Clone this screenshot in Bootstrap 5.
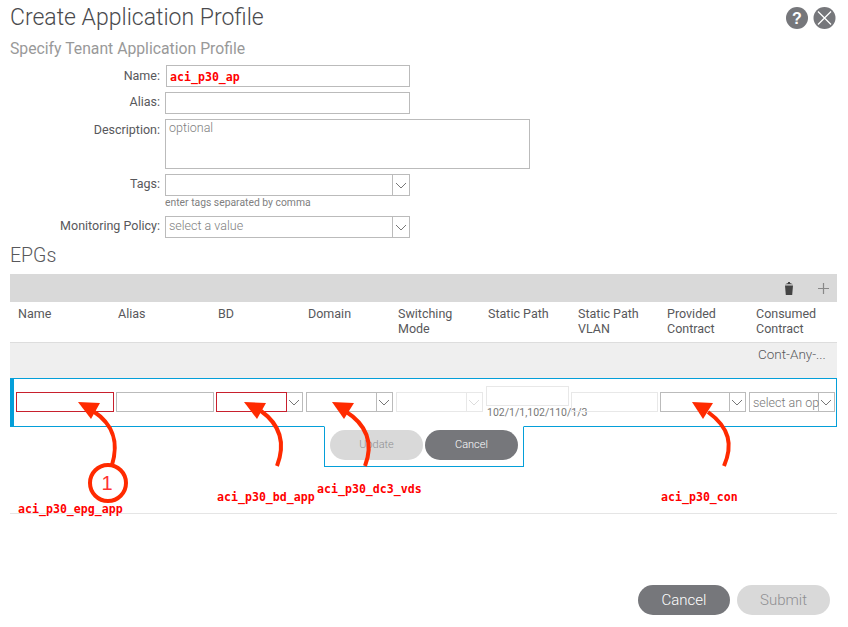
<!DOCTYPE html>
<html lang="en">
<head>
<meta charset="utf-8">
<title>Create Application Profile</title>
<link rel="stylesheet" href="https://cdn.jsdelivr.net/npm/bootstrap@5.3.0/dist/css/bootstrap.min.css">
<style>
html,body{background:#fff;}
body{font-family:Roboto,"Liberation Sans",sans-serif;font-weight:300;color:#58585b;margin:0;}
.pg{position:relative;width:848px;height:627px;overflow:hidden;}
.ttl-row{height:36px;padding:0 12px 0 10px;}
.ttl{font-size:23px;font-weight:300;margin:0;line-height:36px;color:#4a4a4d;}
.sub{font-size:15.75px;line-height:18px;margin:4px 0 7px 10px;color:#999;font-weight:400;}
.lbl{width:160px;margin-right:5px;text-align:right;font-size:12.5px;font-weight:400;color:#58585b;margin-bottom:0;line-height:18px;flex:none;padding-top:1px;}
.frow{margin-bottom:5px;}
.frow:first-child .lbl,.lbl-ds.lbl{padding-top:2px;}
.fld.form-control{border:1px solid #bbb;border-radius:0;padding:0 3px;height:22px;min-height:0;font-size:12.5px;line-height:18px;box-shadow:none;background:#fff;color:#808080;font-weight:300;}
.w-name{width:244px;margin-left:1px;}
.w-al{width:245px;}
.w-ds.form-control{width:365px;height:50px;resize:none;line-height:15px;}
.cmb{width:245px;flex:none;flex-wrap:nowrap;}
.cmb .fld{flex:1 1 auto;width:1%;}
.chev{width:18px;flex:none;border:1px solid #bbb;border-left:0;background:#fff;display:flex;align-items:center;justify-content:center;padding:0;}
.hint{font-size:10.35px;line-height:12px;margin:1px 0 7px 165px;color:#808080;font-weight:400;}
.sec{font-size:19.5px;font-weight:300;line-height:24px;margin:6px 0 6px 10px;color:#58585b;}
.tbar{height:28px;margin:0 11px 0 10px;background:#d9d9d9;padding-right:8px;}
.tbl-wrap{margin:0 11px 0 10px;}
.grid-tb.table{table-layout:fixed;width:827px;margin:0;--bs-table-bg:transparent;color:#58585b;}
.grid-tb th{font-size:12.5px;font-weight:400;line-height:15px;padding:4px 8px 6px;height:40px;vertical-align:top;border-bottom:1px solid #ddd;color:#58585b;}
.grid-tb td{background:#efefef;height:35px;padding:1px 0 0 10px;border:0;font-size:13.5px;font-weight:300;vertical-align:top;line-height:20px;color:#58585b;white-space:nowrap;}
.c1,.c2{width:100px;}.c3,.c4,.c5,.c6{width:90px;}.c7,.c8,.c9{width:89px;}
.edit{margin:0 11px 0 10px;height:49px;border:1px solid #049fd9;border-left-width:4px;padding-left:2px;}
.edit .fld{height:20px;}
.edit .chev{width:17px;}
.err.form-control{border-color:#c8202d;}
.e1{width:98px;margin-right:2px;}
.e3{width:87px;margin-right:3px;}
.e3 .err{border-right-color:#c8202d;}
.e4{width:87px;margin-right:3px;}
.e5{width:87px;margin-right:3px;}
.e5 .fld,.e5 .chev,.e7.fld,.e6 .fld{border-color:#e8e8e8;}
.e6{width:83px;margin-right:2px;height:32px;}
.e6 .fld{height:20px;}
.e6txt{white-space:nowrap;font-size:10.5px;line-height:12px;color:#777;font-weight:400;margin:1px 0 0 1px;}
.edit .e7.fld{width:87px;flex:none;margin-right:2px;background:transparent;}
.e8{width:86px;margin-right:3px;}
.e9{width:86px;}
.e9 .fld{color:#777;white-space:nowrap;padding-right:0;line-height:20px;}
.actbox{width:200px;height:41px;margin:-1px 0 0 324px;border:1px solid #049fd9;border-top-color:#fff;padding:3px 5px 0;gap:2px;}
.pill.btn{height:30px;width:93px;border-radius:15px;border:0;padding:0;font-size:11px;font-weight:300;line-height:30px;}
.pill-on.btn{background:#76777b;color:#fff;}
.pill-off.btn{background:#d9d9d9;color:#8f8f92;}
.pill-off.btn:disabled{background:#d9d9d9;color:#8f8f92;opacity:1;}
.rule{height:1px;background:#e5e5e5;margin:46px 11px 0 10px;}
.foot{margin:71px 18px 0 0;gap:7px;}
.foot .pill.btn{font-size:15px;line-height:28px;}
.foot .pill-on.btn{width:92px;}
.note{position:absolute;font-family:"DejaVu Sans Mono",monospace;font-weight:700;font-size:11.6px;line-height:14px;color:#f00;white-space:nowrap;}
.n1{left:18px;top:502px;}
.n2{left:217px;top:490px;}
.n3{left:317px;top:482px;}
.n4{left:661px;top:490px;}
.nameval.form-control{font-family:"DejaVu Sans Mono",monospace;font-weight:700;font-size:11.6px;color:#f00;padding-left:3px;padding-top:3px;line-height:16px;}
.arrows{position:absolute;left:0;top:0;pointer-events:none;}
.one{font-family:"Liberation Sans",sans-serif;font-size:20px;fill:#f33;}
</style>
</head>
<body>
<div class="pg">
  <div class="ttl-row d-flex justify-content-between align-items-center">
    <h1 class="ttl">Create Application Profile</h1>
    <div class="d-flex">
      <svg width="24" height="24" viewBox="0 0 24 24"><circle cx="12" cy="12" r="11" fill="#76777b"/><text x="12" y="17.5" text-anchor="middle" font-family="Liberation Sans" font-weight="700" font-size="16" fill="#fff">?</text></svg>
      <svg class="ms-1" width="23" height="24" viewBox="0 0 23 24"><circle cx="11.5" cy="12" r="11" fill="#76777b"/><path d="M5 5.500 18 18.500M18 5.500 5 18.500" stroke="#fff" stroke-width="1.300"/></svg>
    </div>
  </div>
  <div class="sub">Specify Tenant Application Profile</div>

  <form>
    <div class="frow d-flex align-items-start">
      <label class="lbl">Name:</label>
      <div class="fld form-control nameval w-name">aci_p30_ap</div>
    </div>
    <div class="frow d-flex align-items-start">
      <label class="lbl">Alias:</label>
      <input class="fld form-control w-al" type="text">
    </div>
    <div class="frow d-flex align-items-start">
      <label class="lbl lbl-ds">Description:</label>
      <div class="fld form-control w-ds">optional</div>
    </div>
    <div class="d-flex align-items-start">
      <label class="lbl">Tags:</label>
      <div class="input-group cmb">
        <input class="fld form-control" type="text">
        <span class="chev"><svg width="12" height="7" viewBox="0 0 12 7"><path d="M1 1l5 5 5-5" fill="none" stroke="#777" stroke-width="1"/></svg></span>
      </div>
    </div>
    <div class="hint">enter tags separated by comma</div>
    <div class="d-flex align-items-start">
      <label class="lbl">Monitoring Policy:</label>
      <div class="input-group cmb">
        <div class="fld form-control">select a value</div>
        <span class="chev"><svg width="12" height="7" viewBox="0 0 12 7"><path d="M1 1l5 5 5-5" fill="none" stroke="#777" stroke-width="1"/></svg></span>
      </div>
    </div>
  </form>

  <div class="sec">EPGs</div>
  <div class="tbar d-flex justify-content-end align-items-center">
    <svg width="10" height="13" viewBox="0 0 10 13" class="me-4"><path d="M1 3.500h8L8.200 13H1.800zM1 2.200 4 1V0h2v1l3 1.200z" fill="#444"/></svg>
    <svg width="11" height="11" viewBox="0 0 11 11"><path d="M5.500 0v11M0 5.500h11" stroke="#888" stroke-width="1.200"/></svg>
  </div>
  <div class="tbl-wrap">
    <table class="table grid-tb">
      <colgroup><col class="c1"><col class="c2"><col class="c3"><col class="c4"><col class="c5"><col class="c6"><col class="c7"><col class="c8"><col class="c9"></colgroup>
      <thead>
        <tr><th>Name</th><th>Alias</th><th>BD</th><th>Domain</th><th>Switching Mode</th><th>Static Path</th><th>Static Path VLAN</th><th>Provided Contract</th><th>Consumed Contract</th></tr>
      </thead>
      <tbody>
        <tr><td></td><td></td><td></td><td></td><td></td><td></td><td></td><td></td><td>Cont-Any-...</td></tr>
      </tbody>
    </table>
  </div>
  <div class="edit d-flex align-items-center">
    <input class="fld form-control err e1 flex-none" type="text">
    <input class="fld form-control e1 flex-none" type="text">
    <div class="input-group flex-nowrap e3">
      <input class="fld form-control err" type="text">
      <span class="chev"><svg width="12" height="7" viewBox="0 0 12 7"><path d="M1 1l5 5 5-5" fill="none" stroke="#777"/></svg></span>
    </div>
    <div class="input-group flex-nowrap e4">
      <input class="fld form-control" type="text">
      <span class="chev"><svg width="12" height="7" viewBox="0 0 12 7"><path d="M1 1l5 5 5-5" fill="none" stroke="#777"/></svg></span>
    </div>
    <div class="input-group flex-nowrap e5">
      <input class="fld form-control" type="text" disabled>
      <span class="chev"><svg width="12" height="7" viewBox="0 0 12 7"><path d="M1 1l5 5 5-5" fill="none" stroke="#ddd"/></svg></span>
    </div>
    <div class="e6 flex-none">
      <input class="fld form-control" type="text">
      <div class="e6txt">102/1/1,102/110/1/3</div>
    </div>
    <input class="fld form-control e7" type="text">
    <div class="input-group flex-nowrap e8">
      <input class="fld form-control" type="text">
      <span class="chev"><svg width="12" height="7" viewBox="0 0 12 7"><path d="M1 1l5 5 5-5" fill="none" stroke="#777"/></svg></span>
    </div>
    <div class="input-group flex-nowrap e9">
      <div class="fld form-control">select an op</div>
      <span class="chev"><svg width="12" height="7" viewBox="0 0 12 7"><path d="M1 1l5 5 5-5" fill="none" stroke="#777"/></svg></span>
    </div>
  </div>
  <div class="actbox d-flex">
    <button type="button" class="btn pill pill-off" disabled>Update</button>
    <button type="button" class="btn pill pill-on">Cancel</button>
  </div>
  <div class="rule"></div>
  <div class="foot d-flex justify-content-end">
    <button type="button" class="btn pill pill-on">Cancel</button>
    <button type="button" class="btn pill pill-off" disabled>Submit</button>
  </div>

  <svg class="arrows" width="848" height="627" viewBox="0 0 848 627">
    <g fill="none" stroke="#ff2a00" stroke-width="4">
      <path d="M112 465C118 445 116 426 93 411"/>
      <path d="M277 466C285 445 282 426 261 411"/>
      <path d="M365 466C373 445 369 426 345 411"/>
      <path d="M724 466C733 445 730 428 708 412"/>
    </g>
    <g fill="#ff2a00">
      <path d="M78 402 100 403 91 419z"/>
      <path d="M244 402 266 403 257 419z"/>
      <path d="M332 402 354 403 344 419z"/>
      <path d="M692 402 713 403 703 419z"/>
    </g>
    <circle cx="108" cy="483" r="18" fill="#fff" stroke="#ff2a00" stroke-width="4"/>
    <text class="one" x="107" y="490" text-anchor="middle">1</text>
  </svg>
  <div class="note n1">aci_p30_epg_app</div>
  <div class="note n2">aci_p30_bd_app</div>
  <div class="note n3">aci_p30_dc3_vds</div>
  <div class="note n4">aci_p30_con</div>
</div>
<script src="https://cdn.jsdelivr.net/npm/bootstrap@5.3.0/dist/js/bootstrap.bundle.min.js"></script>
</body>
</html>
